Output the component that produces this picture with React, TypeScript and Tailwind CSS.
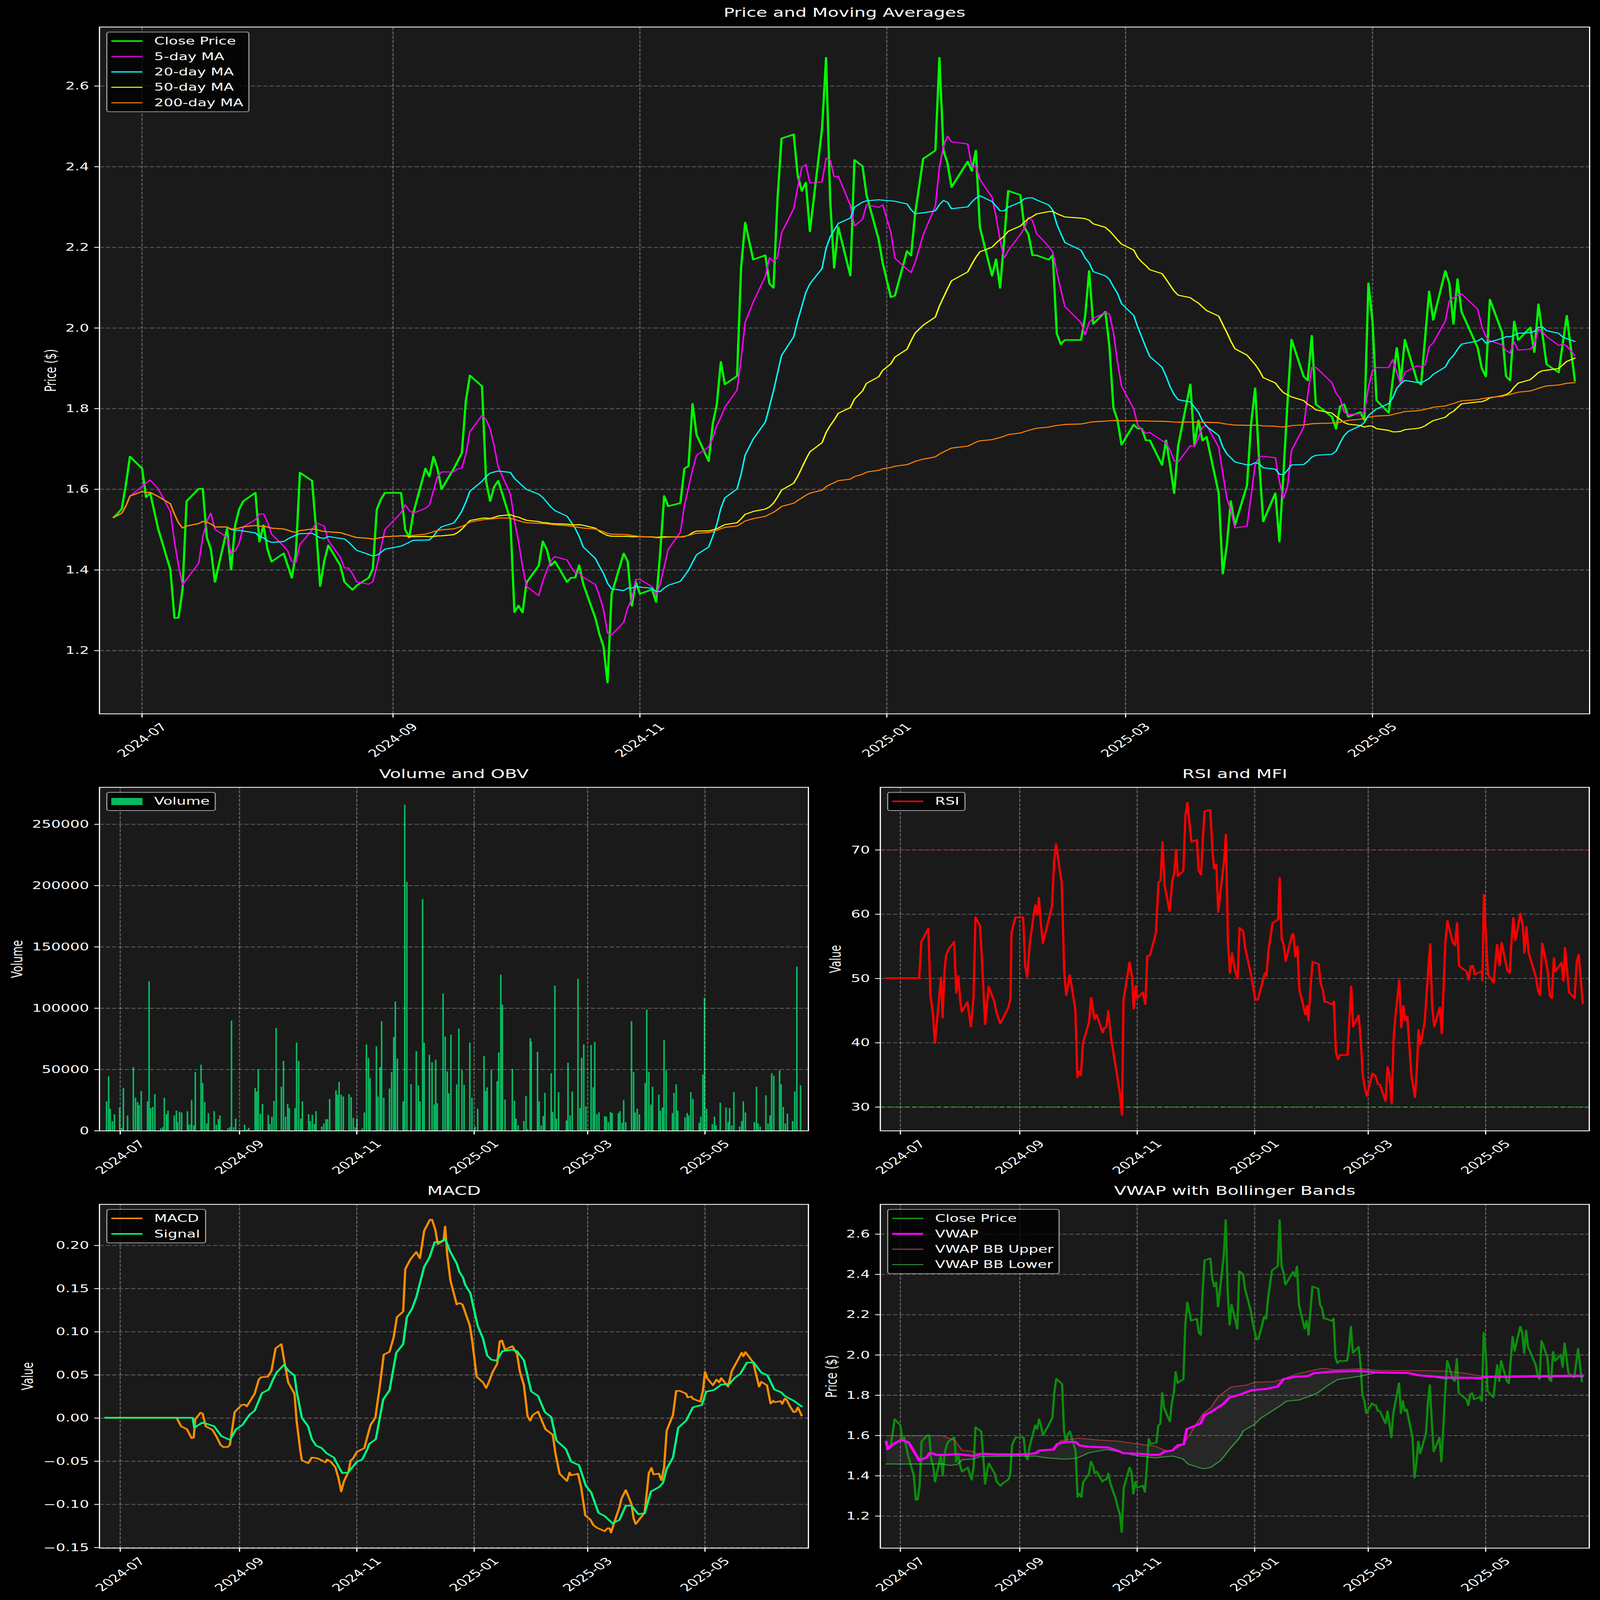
import React, { useEffect, useState } from "react";

type P = [number, number];
const base = (ox: number, oy: number, sx: number, sy: number, pts: number[][]): P[] =>
  pts.map(([a, b]) => [ox + a / sx, oy + b / sy] as P);

// Close price vertices traced on the main panel, in page pixels.
const closeVerts: P[] = [
  ...base(280, 1750, 1, 1.568, [
    [37,555],[48,530],[60,500],[72,345],[83,168],[117,243],[128,427],[140,400],[162,630],[196,889],[207,1197],[219,1195],[231,1015],[242,452],[275,373],[287,373],[298,683],[309,760],[321,967],[355,628],[366,889],[377,605],[388,503],[400,452],[434,398],[445,710],[457,605],[468,760],[480,838],[514,785],[536,941],[547,785],[558,270],[593,322],[604,630],[615,993],[626,835],[637,733],[672,863],[683,967],[706,1018],[717,990],[751,940],[763,885],[773,505],[784,440],[796,399],[841,399],[852,632],[864,684],[875,530],[909,244],[920,295],[932,168],[943,245],[955,375],[989,245],[1011,145],[1021,-188],[1033,-350],[1055,-280],[1067,-188],[1078,325],[1089,452],[1100,360],[1112,322],[1146,570],[1158,1160],[1169,1118],[1181,1162],[1192,970],[1226,863],[1237,708],[1249,760],[1260,863],[1271,835],[1306,967],[1317,940],[1328,940],[1338,860],[1350,980],[1384,1197],[1395,1300],[1407,1378],[1418,1609],[1429,1045],[1463,785],[1474,838],[1486,1120],[1497,967],[1508,1043],[1543,1015],[1554,1095],[1565,785],
  ]),
  ...base(1500, 1000, 1.045, 1.568, [
    [373,1595],[385,1660],[419,1640],[432,1420],[441,1405],[455,1007],[467,1205],[503,1373],[514,1135],[526,1012],[538,740],[550,883],[585,830],[596,140],[607,-148],[632,87],[668,60],[680,240],[692,268],[703,-300],[715,-685],[750,-711],[762,-448],[774,-350],[786,-403],[798,-93],[833,-748],[845,-1200],[857,-298],[870,140],[880,-121],[916,190],[928,-548],[952,-508],[963,-323],[999,-40],[1011,110],[1035,327],[1046,317],[1082,33],[1094,62],[1105,-205],[1128,-556],[1164,-608],[1176,-1200],[1188,-608],[1200,-528],[1212,-375],[1235,-538],[1258,-711],[1270,-478],[1282,-608],[1294,-118],[1306,10],[1330,190],[1341,85],[1353,268],[1365,-40],[1378,-351],[1412,-325],[1424,-118],[1436,-73],[1448,60],[1460,60],[1495,88],[1507,60],[1519,560],[1531,627],[1543,600],
  ]),
  ...base(2971, 1000, 1.045, 1.568, [
    [52,600],[65,450],[76,160],[88,498],[123,420],[135,640],[147,1035],[158,1110],[171,1268],[206,1140],[218,1165],[230,1165],[241,1240],[253,1240],[288,1397],[300,1240],[312,1400],[324,1577],
  ]),
  ...base(2900, 1400, 1.568, 1.568, [
    [614,645],[632,510],[667,255],[685,640],[703,485],[720,615],[738,590],[768,950],[792,1200],[809,1463],[827,1285],[845,1000],[862,1155],[915,900],[933,510],[951,280],[969,750],[987,1130],[1040,950],[1058,1258],[1075,830],[1093,375],
  ]),
  ...base(2971, 1000, 1.045, 1.568, [
    [666,598],[702,833],[713,858],[725,573],[737,1010],[784,1090],[797,1167],[808,1022],[820,1010],[832,1090],[867,1060],[879,1112],[891,238],[903,480],[915,985],[950,1065],[973,650],[985,860],[997,598],[1033,860],[1045,885],[1068,290],[1080,472],[1115,160],[1127,240],[1139,498],[1151,212],[1163,420],[1210,650],[1222,780],[1234,833],[1245,342],[1280,550],[1293,832],[1305,858],[1317,482],[1329,600],[1363,520],[1376,678],[1387,372],[1411,755],[1447,807],[1470,445],[1494,860],
  ]),
];

const HOLIDAYS = new Set([3, 63, 150, 177, 184, 192, 203, 231, 291, 329, 353]);
const days: number[] = [];
for (let d = -7; d <= 354; d++) {
  const wd = ((d % 7) + 7) % 7;
  if (wd < 5 && !HOLIDAYS.has(d)) days.push(d);
}
const pxToDay = (x: number) => (x - 397) / 11.31;
const pxToVal = (y: number) => 2.6 - (y - 350) / 1640;

const close: number[] = (() => {
  const raw: (number | null)[] = days.map(() => null);
  for (const [x, y] of closeVerts) {
    const d = pxToDay(x);
    let best = 0;
    let bd = 1e9;
    days.forEach((t, i) => {
      const e = Math.abs(t - d);
      if (e < bd) { bd = e; best = i; }
    });
    if (raw[best] === null) raw[best] = pxToVal(y);
  }
  const out: number[] = [];
  for (let i = 0; i < raw.length; i++) {
    if (raw[i] !== null) { out.push(raw[i] as number); continue; }
    let j = i + 1;
    while (j < raw.length && raw[j] === null) j++;
    const a = out[i - 1] ?? (raw[j] as number);
    const b = j < raw.length ? (raw[j] as number) : a;
    out.push(a + (b - a) / (j - i + 1));
  }
  return out;
})();

const rolling = (arr: number[], w: number, minP: number): (number | null)[] =>
  arr.map((_, i) => {
    const s = Math.max(0, i - w + 1);
    if (i - s + 1 < minP) return null;
    let t = 0;
    for (let k = s; k <= i; k++) t += arr[k];
    return t / (i - s + 1);
  });

const rsiPts: number[][] = [[160,972],[225,972],[229,850],[243,806],[247,1030],[252,1090],[256,1190],[262,1080],[268,970],[271,1105],[275,945],[278,895],[283,875],[294,850],[298,1022],[302,965],[306,1050],[309,1085],[320,1052],[327,1135],[332,1040],[336,768],[345,797],[349,920],[355,1127],[362,1000],[373,1050],[377,1085],[385,1125],[401,1070],[405,1040],[407,820],[412,785],[415,768],[430,768],[434,930],[438,968],[443,855],[450,770],[454,727],[458,760],[461,702],[465,790],[469,855],[487,730],[491,580],[495,522],[503,620],[506,650],[511,950],[515,1030],[522,962],[530,1045],[533,1080],[537,1305],[540,1285],[544,1298],[548,1190],[560,1120],[564,1038],[571,1110],[575,1095],[587,1155],[590,1140],[594,1137],[598,1082],[604,1180],[616,1305],[621,1360],[625,1432],[628,1045],[640,918],[645,970],[648,1075],[652,998],[655,1040],[666,1020],[671,1060],[675,897],[680,897],[692,820],[697,650],[701,645],[705,515],[709,660],[719,748],[724,650],[728,620],[732,540],[735,630],[746,612],[750,430],[754,383],[762,515],[773,508],[776,610],[781,625],[785,490],[788,412],[799,407],[804,555],[807,605],[811,590],[815,750],[818,700],[827,570],[830,490],[834,850],[838,955],[842,888],[848,945],[853,975],[857,803],[864,815],[868,870],[880,965],[888,1045],[893,1045],[907,955],[910,965],[914,880],[922,787],[933,775],[936,635],[940,840],[944,860],[948,915],[960,830],[963,823],[967,900],[971,865],[975,1010],[987,1095],[990,1065],[993,1115],[997,1000],[1001,917],[1013,925],[1017,990],[1021,1010],[1025,1052],[1030,1052],[1040,1062],[1043,1050],[1047,1220],[1051,1245],[1055,1230],[1070,1230],[1077,1000],[1081,1135],[1092,1097],[1096,1180],[1100,1300],[1104,1340],[1108,1368],[1119,1292],[1125,1300],[1130,1328],[1134,1330],[1145,1385],[1149,1270],[1153,1300],[1157,1393],[1161,1170],[1165,1090],[1172,980],[1176,1138],[1180,1065],[1184,1115],[1188,1100],[1196,1300],[1203,1372],[1207,1270],[1210,1145],[1214,1195],[1222,1120],[1229,950],[1233,857],[1237,1070],[1241,1135],[1252,1070],[1256,1158],[1260,980],[1263,850],[1267,780],[1278,855],[1282,862],[1286,787],[1290,932],[1305,950],[1309,978],[1313,932],[1317,930],[1321,960],[1335,948],[1336,980],[1339,692],[1343,830],[1347,960],[1358,988],[1365,860],[1370,930],[1374,853],[1385,945],[1390,955],[1393,860],[1397,770],[1401,845],[1405,810],[1411,755],[1416,800],[1419,888],[1423,800],[1427,885],[1441,965],[1446,1015],[1450,1030],[1454,855],[1462,920],[1465,950],[1469,1030],[1473,1040],[1477,905],[1480,950],[1492,920],[1496,982],[1499,870],[1507,1020],[1518,1040],[1522,920],[1526,893],[1534,1057]];

const macdPts: number[][] = [[201,925],[335,925],[338,930],[345,955],[356,965],[365,997],[369,995],[372,930],[382,907],[386,910],[392,955],[405,968],[412,990],[420,1020],[425,1028],[434,1028],[438,1020],[447,905],[460,880],[466,878],[470,885],[485,840],[493,790],[497,782],[510,780],[517,760],[525,680],[536,665],[542,730],[549,800],[561,840],[565,935],[572,1040],[575,1075],[587,1085],[594,1065],[605,1068],[620,1082],[623,1072],[630,1080],[639,1100],[645,1140],[650,1185],[655,1150],[664,1115],[668,1075],[672,1070],[680,1045],[694,1032],[700,990],[706,950],[715,925],[723,820],[731,702],[742,692],[750,640],[756,570],[768,550],[772,400],[782,365],[793,340],[800,362],[808,265],[819,226],[823,226],[829,260],[834,312],[845,300],[848,250],[852,350],[858,440],[870,525],[875,520],[881,525],[895,600],[900,660],[908,780],[920,800],[926,820],[931,800],[938,765],[947,735],[952,655],[956,652],[962,685],[976,672],[985,700],[990,760],[998,810],[1005,920],[1010,935],[1015,915],[1025,903],[1031,930],[1039,965],[1053,985],[1058,1050],[1066,1122],[1080,1148],[1085,1118],[1088,1128],[1101,1122],[1107,1170],[1115,1270],[1125,1285],[1130,1303],[1137,1313],[1152,1325],[1157,1315],[1161,1315],[1164,1330],[1170,1295],[1180,1240],[1184,1210],[1192,1180],[1203,1230],[1207,1280],[1211,1300],[1218,1283],[1228,1260],[1236,1120],[1241,1102],[1245,1125],[1255,1122],[1260,1145],[1265,1100],[1270,970],[1282,915],[1288,830],[1295,830],[1307,840],[1310,853],[1317,850],[1320,858],[1334,868],[1339,830],[1343,763],[1347,785],[1358,810],[1365,790],[1370,800],[1374,785],[1387,815],[1394,760],[1413,695],[1416,708],[1420,693],[1435,730],[1440,770],[1446,815],[1450,798],[1461,810],[1468,875],[1473,865],[1476,870],[1487,866],[1490,876],[1495,857],[1498,860],[1505,885],[1512,905],[1516,903],[1520,888],[1527,917]];

const signalPts: number[][] = [[201,925],[367,925],[370,960],[385,942],[392,945],[408,955],[422,990],[438,1003],[450,965],[462,950],[475,915],[485,900],[499,838],[512,825],[520,790],[527,765],[541,738],[550,760],[561,775],[565,830],[575,925],[587,955],[594,1000],[602,1023],[613,1032],[622,1050],[636,1065],[643,1090],[652,1120],[663,1118],[680,1080],[690,1072],[700,1035],[703,1018],[716,1000],[730,860],[742,828],[755,695],[768,665],[775,570],[785,540],[793,500],[808,392],[818,360],[828,305],[840,303],[848,293],[858,340],[870,380],[875,410],[882,430],[886,455],[896,485],[905,560],[910,600],[920,645],[928,705],[936,720],[946,723],[957,690],[976,685],[985,690],[998,722],[1012,832],[1025,848],[1038,905],[1050,922],[1060,1005],[1078,1035],[1088,1080],[1103,1092],[1116,1165],[1126,1188],[1140,1260],[1152,1272],[1167,1298],[1180,1285],[1192,1235],[1203,1235],[1216,1265],[1228,1262],[1240,1185],[1255,1170],[1263,1155],[1270,1105],[1282,1065],[1292,960],[1307,935],[1320,888],[1337,880],[1345,833],[1360,827],[1374,808],[1390,805],[1399,785],[1410,770],[1423,730],[1436,730],[1450,765],[1462,775],[1475,825],[1488,835],[1495,848],[1512,865],[1527,885]];

const vwapPts: number[][] = [[160,1010],[163,1035],[176,1015],[190,1003],[204,1012],[225,1075],[240,1065],[245,1050],[252,1050],[258,1056],[275,1056],[300,1053],[325,1058],[332,1060],[350,1052],[375,1055],[405,1055],[440,1053],[455,1050],[462,1040],[490,1037],[497,1018],[512,1010],[533,1010],[542,1023],[560,1027],[598,1030],[615,1040],[628,1050],[660,1052],[685,1056],[700,1055],[708,1045],[725,1040],[735,1022],[747,1018],[753,965],[780,945],[788,915],[800,905],[825,876],[837,853],[855,845],[880,828],[910,823],[932,815],[944,788],[968,780],[992,778],[1003,768],[1040,762],[1095,760],[1130,765],[1190,767],[1210,775],[1260,782],[1335,785],[1340,780],[1534,776]];
const bbUpper: number[][] = [[160,988],[270,988],[295,1005],[310,1040],[330,1043],[335,1050],[405,1052],[440,1052],[455,1047],[465,1040],[490,1035],[505,1005],[540,997],[575,1003],[620,1008],[650,1016],[690,1025],[710,1040],[725,1040],[745,1020],[760,980],[785,910],[800,890],[815,850],[840,816],[870,810],[885,800],[925,797],[940,790],[970,770],[990,762],[1020,750],[1045,756],[1095,752],[1135,758],[1200,758],[1260,760],[1300,767],[1335,778],[1534,776]];
const bbLower: number[][] = [[160,1088],[270,1088],[285,1093],[300,1090],[310,1073],[330,1071],[345,1062],[400,1061],[455,1060],[470,1065],[510,1071],[535,1068],[560,1048],[595,1037],[620,1045],[650,1058],[690,1066],[725,1060],[745,1070],[755,1088],[785,1105],[800,1100],[820,1075],[840,1030],[855,1000],[865,970],[885,950],[900,925],[935,885],[950,866],[975,862],[990,852],[1010,838],[1030,812],[1050,790],[1070,785],[1095,778],[1130,765],[1190,767],[1260,787],[1335,785],[1340,783],[1534,780]];
const z10 = (pts: number[][]): P[] => base(2250, 4700, 0.706, 0.8677, pts);
const z9 = (pts: number[][]): P[] => base(0, 4700, 0.6817, 0.8677, pts);
const z8 = (pts: number[][]): P[] => base(2250, 2800, 0.706, 0.8253, pts);

const volume: number[][] = [[203,24],[207,44.5],[210,18],[214,8],[218,13.5],[228,19],[232,2.5],[235,35],[243,12.5],[254,52],[258,27],[262,23.5],[265,21],[269,32.5],[281,24],[284,122],[287,18.5],[291,19.5],[295,30],[306,2],[310,3],[313,27],[317,13.5],[320,16.5],[332,12.5],[336,16.5],[338,7],[342,15.5],[346,15],[357,16],[360,5],[364,5.5],[365,25],[369,4.5],[372,48],[383,54],[386,39],[390,23.5],[394,6],[397,14.5],[408,16],[412,5],[416,9.5],[419,12.5],[423,1],[434,2],[438,3],[441,90],[445,3],[449,10],[461,0.5],[466,5],[470,1],[474,2.5],[486,35],[489,32],[492,50],[496,14],[500,22],[511,13],[514,5.5],[518,11.5],[522,24.5],[526,84],[536,36],[540,57],[544,11.5],[548,22],[551,18.5],[562,18.5],[565,72],[569,57],[573,10],[576,24],[588,13.5],[591,8],[595,13],[599,5.5],[602,16],[613,3.5],[617,6],[621,9.5],[624,9.5],[628,26],[640,33],[643,29.5],[646,40],[650,29.5],[654,28],[665,30],[669,27.5],[673,10.5],[677,3],[680,10],[690,2],[694,15],[698,70.5],[702,59.5],[705,43],[717,69],[720,28],[724,52],[727,89.5],[731,27],[742,34.5],[746,48],[750,76.5],[753,105.5],[757,59],[768,24],[771,266],[775,203],[783,38],[793,65],[797,37],[800,24],[805,189],[808,72],[818,62],[823,56],[827,21.5],[830,58],[833,22.5],[844,112],[848,77],[852,48.5],[855,30.5],[859,78.5],[870,38],[874,83.5],[880,49.5],[884,37.5],[895,72],[899,27],[905,3.5],[910,18],[922,61],[925,32.5],[928,35.5],[936,49.5],[947,40.5],[950,64],[954,127.5],[957,103],[962,25.5],[976,50.5],[980,24.5],[983,10],[987,4.5],[998,8],[1002,28.5],[1005,1.5],[1010,75.5],[1012,73],[1024,64.5],[1027,24],[1031,4.5],[1035,12],[1038,31],[1050,47],[1053,15.5],[1057,118.5],[1060,10],[1064,31.5],[1079,8.5],[1082,55.5],[1086,12.5],[1090,32],[1101,124],[1105,18.5],[1108,59.5],[1112,70.5],[1116,20],[1126,70],[1130,35.5],[1133,72.5],[1137,13.5],[1141,15],[1152,12],[1155,11.5],[1159,7],[1163,15.5],[1166,14.5],[1178,14.5],[1181,16],[1185,6.5],[1188,25],[1192,7],[1203,89.5],[1207,48],[1210,15],[1214,18],[1218,13.5],[1229,39],[1232,99],[1236,48],[1240,21.5],[1243,36],[1255,29.5],[1258,16.5],[1262,19],[1265,74],[1269,49.5],[1281,14.5],[1284,31],[1288,38],[1291,16.5],[1305,11],[1309,14.5],[1312,12.5],[1316,31.5],[1320,26],[1332,6.5],[1335,11.5],[1339,46],[1342,108.5],[1346,18],[1357,5.5],[1361,11.5],[1364,4.5],[1368,1],[1372,23],[1383,19],[1387,7],[1390,18.5],[1394,4.5],[1398,31.5],[1409,3.5],[1413,8],[1416,24],[1420,15],[1423,0.5],[1437,7],[1441,36],[1444,6],[1448,3.5],[1459,29],[1463,6],[1467,12.5],[1470,47],[1474,45],[1485,49.5],[1488,38],[1492,19.5],[1496,6],[1500,14],[1510,8],[1514,32],[1518,134],[1525,37]];

const X_LABELS = ["2024-07", "2024-09", "2024-11", "2025-01", "2025-03", "2025-05"];
const X_DAYS = [0, 62, 123, 184, 243, 304];
const LEFT = { l: 278, r: 2259, x0: 336, per: 5.375 };
const RIGHT = { l: 2460, r: 4441, x0: 2516, per: 5.38 };

type Box = { l: number; r: number; t: number; b: number; x0: number; per: number };
type Tick = { label: string; y: number };
type Line = { d: string; color: string; width: number; opacity?: number };

const toPath = (pts: P[]) => pts.map(([x, y], i) => `${i ? "L" : "M"}${x.toFixed(1)} ${y.toFixed(1)}`).join("");

const serie = (box: Box, vals: (number | null)[], yOf: (v: number) => number) => {
  const pts: P[] = [];
  vals.forEach((v, i) => {
    if (v !== null) pts.push([box.x0 + days[i] * box.per, yOf(v)]);
  });
  return toPath(pts);
};

const FONT = "font-['DejaVu_Sans',sans-serif]";

function Axes({
  id, box, ox, oy, w, h, ticks, yLabel, yLabelX, children,
}: {
  id: string; box: Box; ox: number; oy: number; w: number; h: number;
  ticks: Tick[]; yLabel: string; yLabelX: number; children: React.ReactNode;
}) {
  const cy = (box.t + box.b) / 2;
  return (
    <svg width={w} height={h} viewBox={`${ox} ${oy} ${w} ${h}`} className="block overflow-visible">
      <defs>
        <clipPath id={id}>
          <rect x={box.l} y={box.t} width={box.r - box.l} height={box.b - box.t} />
        </clipPath>
      </defs>
      <rect x={box.l} y={box.t} width={box.r - box.l} height={box.b - box.t} fill="#1a1a1a" />
      <g clipPath={`url(#${id})`}>{children}</g>
      <rect x={box.l} y={box.t} width={box.r - box.l} height={box.b - box.t} fill="none" stroke="#ffffff" strokeWidth={3.33} />
      {ticks.map((t) => (
        <g key={t.label}>
          <line x1={box.l - 14.6} x2={box.l} y1={t.y} y2={t.y} stroke="#ffffff" strokeWidth={3.33} />
          <text x={box.l - 29} y={t.y} textAnchor="end" dominantBaseline="central" fill="#ffffff" className={`${FONT} text-[41.67px]`}>
            {t.label}
          </text>
        </g>
      ))}
      {X_DAYS.map((d, i) => {
        const x = box.x0 + d * box.per;
        return (
          <g key={d}>
            <line x1={x} x2={x} y1={box.b} y2={box.b + 14.6} stroke="#ffffff" strokeWidth={3.33} />
            <text
              transform={`translate(${x} ${box.b + 107}) rotate(-45)`}
              textAnchor="middle"
              dominantBaseline="central"
              fill="#ffffff"
              className={`${FONT} text-[41.67px]`}
            >
              {X_LABELS[i]}
            </text>
          </g>
        );
      })}
      <text
        transform={`translate(${yLabelX} ${cy}) rotate(-90)`}
        textAnchor="middle"
        dominantBaseline="central"
        fill="#ffffff"
        className={`${FONT} text-[41.67px]`}
      >
        {yLabel}
      </text>
    </svg>
  );
}

function Grid({ box, ticks }: { box: Box; ticks: Tick[] }) {
  return (
    <g stroke="#ffffff" strokeOpacity={0.3} strokeWidth={3.33} strokeDasharray="12.3 5.3">
      {X_DAYS.map((d) => {
        const x = box.x0 + d * box.per;
        return <line key={d} x1={x} x2={x} y1={box.b} y2={box.t} />;
      })}
      {ticks.map((t) => (
        <line key={t.label} x1={box.l} x2={box.r} y1={t.y} y2={t.y} />
      ))}
    </g>
  );
}

function Lines({ lines }: { lines: Line[] }) {
  return (
    <>
      {lines.map((l, i) => (
        <path key={i} d={l.d} fill="none" stroke={l.color} strokeOpacity={l.opacity ?? 1} strokeWidth={l.width} strokeLinejoin="round" strokeLinecap="square" />
      ))}
    </>
  );
}

function Legend({ className, items }: { className: string; items: { label: string; swatch: string }[] }) {
  return (
    <div className={`absolute top-[19px] flex flex-col rounded-[8px] border-[3.3px] border-[#a3a3a3] bg-black/80 py-[4px] pl-[11px] pr-[14px] text-white ${FONT} text-[41.67px] ${className}`}>
      {items.map((it) => (
        <div key={it.label} className="flex h-[62.6px] items-center whitespace-nowrap">
          <div className={`w-[87px] shrink-0 ${it.swatch}`} />
          <span className="ml-[33px] leading-none">{it.label}</span>
        </div>
      ))}
    </div>
  );
}

function Title({ text, className }: { text: string; className: string }) {
  return (
    <div className={`flex h-[110px] flex-col justify-end text-center text-[50px] leading-[60px] text-white ${FONT} ${className}`}>
      {text}
    </div>
  );
}

function priceTicks(yOf: (v: number) => number): Tick[] {
  return [1.2, 1.4, 1.6, 1.8, 2.0, 2.2, 2.4, 2.6].map((v) => ({ label: v.toFixed(1), y: yOf(v) }));
}

function MainChart() {
  const box: Box = { l: 278, r: 4442, t: 110, b: 2903, x0: 397, per: 11.31 };
  const yOf = (v: number) => 350 + (2.6 - v) * 1640;
  const ticks = priceTicks(yOf);
  const lines: Line[] = [
    { d: serie(box, close, yOf), color: "#00ff00", width: 6.25 },
    { d: serie(box, rolling(close, 5, 5), yOf), color: "#ff00ff", width: 4.17 },
    { d: serie(box, rolling(close, 20, 20), yOf), color: "#00ffff", width: 4.17 },
    { d: serie(box, rolling(close, 50, 1), yOf), color: "#ffff00", width: 4.17 },
    { d: serie(box, rolling(close, 200, 1), yOf), color: "#ff8000", width: 4.17 },
  ];
  return (
    <div className="flex flex-col">
      <Title text="Price and Moving Averages" className="pl-[278px] pr-[29px] pb-[29px]" />
      <div className="relative h-[2982px] w-[4471px]">
        <Axes id="c-main" box={box} ox={0} oy={110} w={4471} h={2982} ticks={ticks} yLabel="Price ($)" yLabelX={142}>
          <Grid box={box} ticks={ticks} />
          <Lines lines={lines} />
        </Axes>
        <Legend
          className="left-[297px]"
          items={[
            { label: "Close Price", swatch: "h-[6.25px] bg-[#00ff00]" },
            { label: "5-day MA", swatch: "h-[4.2px] bg-[#ff00ff]" },
            { label: "20-day MA", swatch: "h-[4.2px] bg-[#00ffff]" },
            { label: "50-day MA", swatch: "h-[4.2px] bg-[#ffff00]" },
            { label: "200-day MA", swatch: "h-[4.2px] bg-[#ff8000]" },
          ]}
        />
      </div>
    </div>
  );
}

function VolumeChart() {
  const box: Box = { ...LEFT, t: 3202, b: 4599 };
  const yOf = (v: number) => 4599 - v * 4.986;
  const ticks: Tick[] = [0, 50000, 100000, 150000, 200000, 250000].map((v) => ({ label: String(v), y: yOf(v / 1000) }));
  return (
    <div className="flex flex-col">
      <Title text="Volume and OBV" className="pl-[278px] pr-[31px] pb-[25px]" />
      <div className="relative h-[1586px] w-[2290px]">
        <Axes id="c-vol" box={box} ox={0} oy={3202} w={2290} h={1586} ticks={ticks} yLabel="Volume" yLabelX={48}>
          {volume.map(([x, v], i) => (
            <rect key={i} x={x / 0.6817 - 2.15} y={yOf(v)} width={4.3} height={v * 4.986} fill="#08ba61" />
          ))}
          <Grid box={box} ticks={ticks} />
        </Axes>
        <Legend className="left-[297px]" items={[{ label: "Volume", swatch: "h-[29px] bg-[#08ba61]" }]} />
      </div>
    </div>
  );
}

function RsiChart() {
  const box: Box = { ...RIGHT, t: 3202, b: 4599 };
  const yOf = (v: number) => 3456.7 + (70 - v) * 26.14;
  const ticks: Tick[] = [30, 40, 50, 60, 70].map((v) => ({ label: String(v), y: yOf(v) }));
  return (
    <div className="flex flex-col">
      <Title text="RSI and MFI" className="pl-[170px] pr-[30px] pb-[25px]" />
      <div className="relative h-[1586px] w-[2181px]">
        <Axes id="c-rsi" box={box} ox={2290} oy={3202} w={2181} h={1586} ticks={ticks} yLabel="Value" yLabelX={2335}>
          <Grid box={box} ticks={ticks} />
          <line x1={box.l} x2={box.r} y1={yOf(70)} y2={yOf(70)} stroke="#ff0000" strokeOpacity={0.5} strokeWidth={4.17} strokeDasharray="15.4 6.7" />
          <line x1={box.l} x2={box.r} y1={yOf(30)} y2={yOf(30)} stroke="#00ff00" strokeOpacity={0.5} strokeWidth={4.17} strokeDasharray="15.4 6.7" />
          <Lines lines={[{ d: toPath(z8(rsiPts)), color: "#ff0000", width: 6.25 }]} />
        </Axes>
        <Legend className="left-[189px]" items={[{ label: "RSI", swatch: "h-[6.25px] bg-[#ff0000]" }]} />
      </div>
    </div>
  );
}

function MacdChart() {
  const box: Box = { ...LEFT, t: 4898, b: 6296 };
  const yOf = (v: number) => 5065.3 + (0.2 - v) * 3510;
  const ticks: Tick[] = [-0.15, -0.1, -0.05, 0, 0.05, 0.1, 0.15, 0.2].map((v) => ({
    label: (v < 0 ? "\u2212" : "") + Math.abs(v).toFixed(2),
    y: yOf(v),
  }));
  return (
    <div className="flex flex-col">
      <Title text="MACD" className="pl-[278px] pr-[31px] pb-[25px]" />
      <div className="relative h-[1609px] w-[2290px]">
        <Axes id="c-macd" box={box} ox={0} oy={4898} w={2290} h={1609} ticks={ticks} yLabel="Value" yLabelX={78}>
          <Grid box={box} ticks={ticks} />
          <Lines
            lines={[
              { d: toPath(z9(macdPts)), color: "#ff8c00", width: 6.25 },
              { d: toPath(z9(signalPts)), color: "#00ff7f", width: 6.25 },
            ]}
          />
        </Axes>
        <Legend
          className="left-[297px]"
          items={[
            { label: "MACD", swatch: "h-[6.25px] bg-[#ff8c00]" },
            { label: "Signal", swatch: "h-[6.25px] bg-[#00ff7f]" },
          ]}
        />
      </div>
    </div>
  );
}

function VwapChart() {
  const box: Box = { ...RIGHT, t: 4898, b: 6296 };
  const yOf = (v: number) => 5019.2 + (2.6 - v) * 819;
  const ticks = priceTicks(yOf);
  const up = z10(bbUpper);
  const lo = z10(bbLower);
  return (
    <div className="flex flex-col">
      <Title text="VWAP with Bollinger Bands" className="pl-[170px] pr-[30px] pb-[25px]" />
      <div className="relative h-[1609px] w-[2181px]">
        <Axes id="c-vwap" box={box} ox={2290} oy={4898} w={2181} h={1609} ticks={ticks} yLabel="Price ($)" yLabelX={2324}>
          <Grid box={box} ticks={ticks} />
          <path d={toPath([...up, ...[...lo].reverse()]) + "Z"} fill="#ffffff" fillOpacity={0.06} />
          <Lines
            lines={[
              { d: serie(box, close, yOf), color: "#0d8c0d", width: 6.25 },
              { d: toPath(up), color: "#ff4e4e", width: 4.17, opacity: 0.5 },
              { d: toPath(lo), color: "#44fa5a", width: 4.17, opacity: 0.5 },
              { d: toPath(z10(vwapPts)), color: "#ff00ff", width: 8.33 },
            ]}
          />
        </Axes>
        <Legend
          className="left-[189px]"
          items={[
            { label: "Close Price", swatch: "h-[6.25px] bg-[#0d8c0d]" },
            { label: "VWAP", swatch: "h-[8.3px] bg-[#ff00ff]" },
            { label: "VWAP BB Upper", swatch: "h-[4.2px] bg-[#8c3434]" },
            { label: "VWAP BB Lower", swatch: "h-[4.2px] bg-[#2f8a3a]" },
          ]}
        />
      </div>
    </div>
  );
}

export default function App() {
  const [size, setSize] = useState({ w: window.innerWidth, h: window.innerHeight });
  useEffect(() => {
    const onResize = () => setSize({ w: window.innerWidth, h: window.innerHeight });
    window.addEventListener("resize", onResize);
    return () => window.removeEventListener("resize", onResize);
  }, []);
  return (
    <div className="h-screen w-screen overflow-hidden bg-black">
      <div
        className="h-[6507px] w-[4471px] origin-top-left bg-black"
        style={{ transform: `scale(${size.w / 4471}, ${size.h / 6507})` }}
      >
        <MainChart />
        <div className="grid grid-cols-[2290px_2181px]">
          <VolumeChart />
          <RsiChart />
          <MacdChart />
          <VwapChart />
        </div>
      </div>
    </div>
  );
}
